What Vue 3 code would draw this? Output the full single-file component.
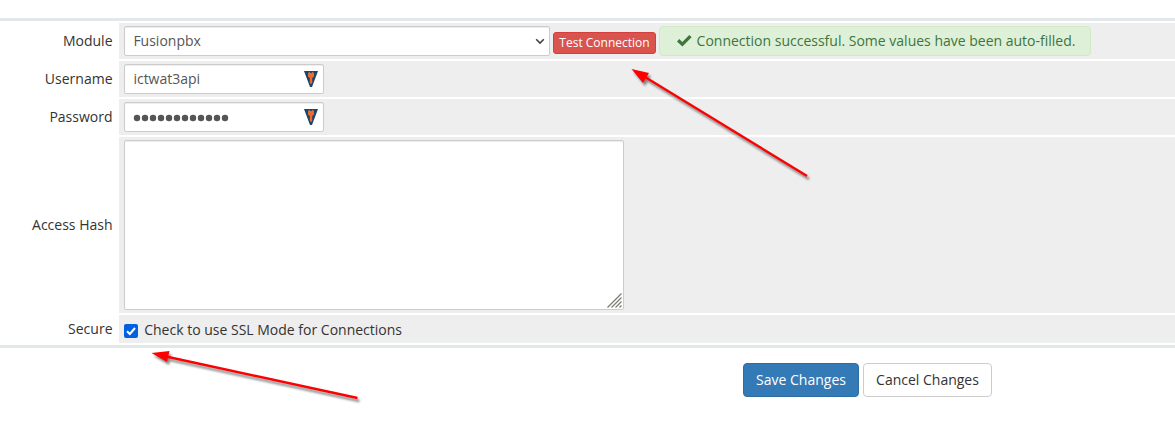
<script setup>
import { ref } from 'vue'

const moduleName = ref('Fusionpbx')
const username = ref('ictwat3api')
const passwordDots = 12
</script>

<template>
  <main class="page">
    <form class="settings" @submit.prevent>
      <div class="row">
        <label class="label">Module</label>
        <div class="field">
          <div class="control select">
            <span>{{ moduleName }}</span>
            <svg class="chevron" width="10" height="7" viewBox="0 0 10 7"><path d="M1.2 1.2 5 5 8.8 1.2" fill="none" stroke="#444" stroke-width="1.6" /></svg>
          </div>
          <button class="test" type="button">Test Connection</button>
          <div class="success">
            <svg class="tick" width="15" height="12" viewBox="0 0 15 12"><path d="M0 6.4 2.3 4.1 5.3 7 12.3 0 14.6 2.2 5.4 11.4Z" fill="#3c763d" /></svg>
            <span>Connection successful. Some values have been auto-filled.</span>
          </div>
        </div>
      </div>
      <div class="row">
        <label class="label">Username</label>
        <div class="field">
          <div class="control input">
            <span>{{ username }}</span>
            <svg class="key" width="14" height="16" viewBox="0 0 14 16"><path d="M0 0H14L8 16H6Z" fill="#1b456b" /><path d="M4 2 5.5 .7 6.3 2H7.700L8.500 .7 10 2V5.500L8.200 7V12L7 13 5.800 12V7L4 5.500Z" fill="#ec6a2c" /></svg>
          </div>
        </div>
      </div>
      <div class="row">
        <label class="label">Password</label>
        <div class="field">
          <div class="control input">
            <svg class="dots" width="98" height="10" viewBox="0 0 98 10"><circle v-for="n in passwordDots" :key="n" :cx="n * 8 - 4" cy="5" r="3.2" fill="#555" /></svg>
            <svg class="key" width="14" height="16" viewBox="0 0 14 16"><path d="M0 0H14L8 16H6Z" fill="#1b456b" /><path d="M4 2 5.5 .7 6.3 2H7.700L8.500 .7 10 2V5.500L8.200 7V12L7 13 5.800 12V7L4 5.500Z" fill="#ec6a2c" /></svg>
          </div>
        </div>
      </div>
      <div class="row hash">
        <label class="label">Access Hash</label>
        <div class="field">
          <div class="control area">
            <svg width="15" height="15" viewBox="0 0 15 15"><path d="M.5 14.5 14.5.5M4.5 14.5 14.5 4.5M8.5 14.5 14.5 8.5M12.5 14.5 14.5 12.5" stroke="#777970" stroke-width="1.2" /></svg>
          </div>
        </div>
      </div>
      <div class="row secure">
        <label class="label">Secure</label>
        <div class="field">
          <svg class="check" width="14" height="14" viewBox="0 0 14 14"><rect width="14" height="14" rx="2" fill="#0060df" /><path d="M3 7.3 5.8 10 11 4" fill="none" stroke="#fff" stroke-width="2" /></svg>
          <span>Check to use SSL Mode for Connections</span>
        </div>
      </div>
    </form>
    <div class="actions">
      <button class="btn primary" type="button">Save Changes</button>
      <button class="btn" type="button">Cancel Changes</button>
    </div>
    <svg class="arrows" width="1175" height="422" viewBox="0 0 1175 422">
      <g class="arrow"><path d="M645 77 807 176" stroke="#f00" stroke-width="2.4" /><path d="M631.5 69 649 73 643 83Z" fill="#f00" /></g>
      <g class="arrow"><path d="M166 356.5 357.5 398" stroke="#f00" stroke-width="2.4" /><path d="M151.5 353 169.5 351 167 362Z" fill="#f00" /></g>
    </svg>
  </main>
</template>

<style>
body { margin: 0; background: #fff; }
</style>

<style scoped>
* { box-sizing: border-box; }
.page {
  position: relative;
  width: 1175px;
  height: 422px;
  padding-top: 18px;
  overflow: hidden;
  font: 14px/20px "Open Sans", "Noto Sans", sans-serif;
  color: #333;
  white-space: nowrap;
}
.settings {
  display: flex;
  flex-direction: column;
  gap: 2px;
  padding: 2px 0;
  border-top: 3px solid #e2e7e9;
  border-bottom: 3px solid #e2e7e9;
}
.row { display: grid; grid-template-columns: 119px 1fr; height: 36px; }
.hash { height: 176px; }
.secure { height: 28px; }
.label { align-self: center; padding-right: 6.5px; text-align: right; }
.field { display: flex; align-items: center; padding-left: 5px; background: #eee; }
.control {
  display: flex;
  align-items: center;
  justify-content: space-between;
  height: 30px;
  padding: 0 5px 0 8.4px;
  background: #fff;
  border: 1px solid #ccc;
  border-radius: 2px;
  box-shadow: inset 0 1px 1px rgba(0, 0, 0, .075);
  color: #555;
}
.select { width: 426px; padding-right: 4px; }
.input { width: 200px; }
.area { width: 500px; height: 170px; padding: 1px; align-items: flex-end; justify-content: flex-end; }
.dots { margin-top: 2px; }
.test {
  width: 103px;
  height: 22px;
  margin: 4px 3px 0;
  padding: 0;
  font: 12px/18px "Open Sans", "Noto Sans", sans-serif;
  color: #fff;
  background: #d9534f;
  border: 1px solid #d43f3a;
  border-radius: 3px;
}
.success {
  display: flex;
  align-items: center;
  gap: 5px;
  width: 432px;
  height: 30px;
  padding-left: 16.6px;
  color: #3c763d;
  background: #dff0d8;
  border: 1px solid #d0e9c6;
  border-radius: 4px;
}
.check { margin: 3px 6.2px 0 0; }
.secure span { padding-top: 2px; }
.actions { display: flex; gap: 4px; padding: 15px 0 0 743px; }
.btn {
  width: 129px;
  height: 34px;
  padding: 0;
  font: 14px/20px "Open Sans", "Noto Sans", sans-serif;
  color: #333;
  background: #fff;
  border: 1px solid #ccc;
  border-radius: 4px;
}
.primary { width: 116px; color: #fff; background: #337ab7; border-color: #2e6da4; }
.arrows { position: absolute; inset: 0; pointer-events: none; }
.arrow { filter: drop-shadow(2px 3px 1px rgba(0, 0, 0, .45)); }
</style>
